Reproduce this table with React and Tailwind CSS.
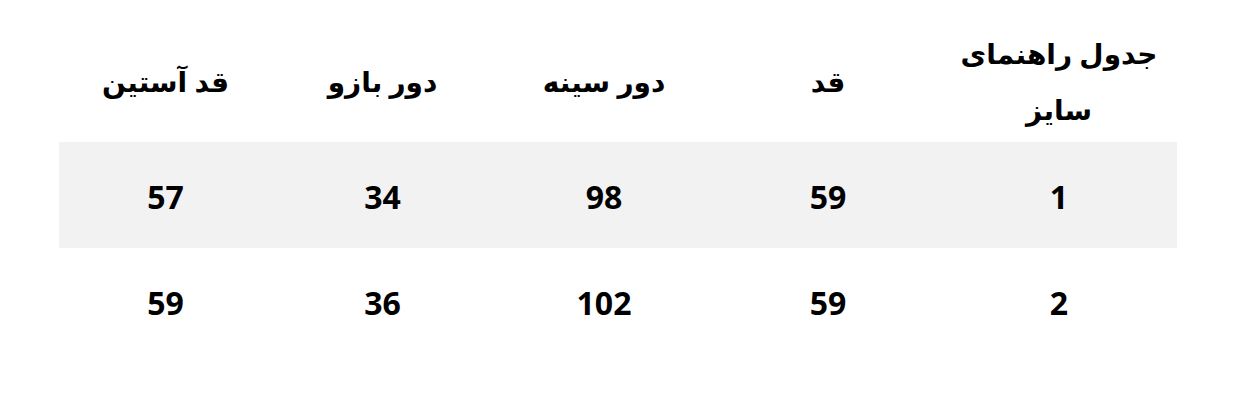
const headers = [['جدول راهنمای', 'سایز'], ['قد'], ['دور سینه'], ['دور بازو'], ['قد آستین']]

const rows = [
  ['1', '59', '98', '34', '57'],
  ['2', '59', '102', '36', '59'],
]

const cols = 'grid grid-cols-[236px_226px_222px_221px_213px]'

export default function App() {
  return (
    <div className="h-[404px] w-[1237px] bg-white pt-[25px] pl-[59px] font-['Open_Sans','DejaVu_Sans',sans-serif] text-black">
      <div dir="rtl" className="w-[1118px]">
        <div className={`${cols} h-[117px]`}>
          {headers.map((lines, i) => (
            <div
              key={i}
              className="flex flex-col items-center justify-center pb-[6px] text-center text-[28px] font-bold leading-[56px]"
            >
              {lines.map((l) => (
                <span key={l} className="whitespace-nowrap">
                  {l}
                </span>
              ))}
            </div>
          ))}
        </div>
        {rows.map((row, r) => (
          <div
            key={r}
            className={`${cols} h-[106px] ${r === 0 ? 'bg-[#f2f2f2]' : 'bg-white'}`}
          >
            {row.map((v, i) => (
              <div
                key={i}
                className="flex items-center justify-center pt-[4px] text-[32px] font-bold"
              >
                {v}
              </div>
            ))}
          </div>
        ))}
      </div>
    </div>
  )
}
